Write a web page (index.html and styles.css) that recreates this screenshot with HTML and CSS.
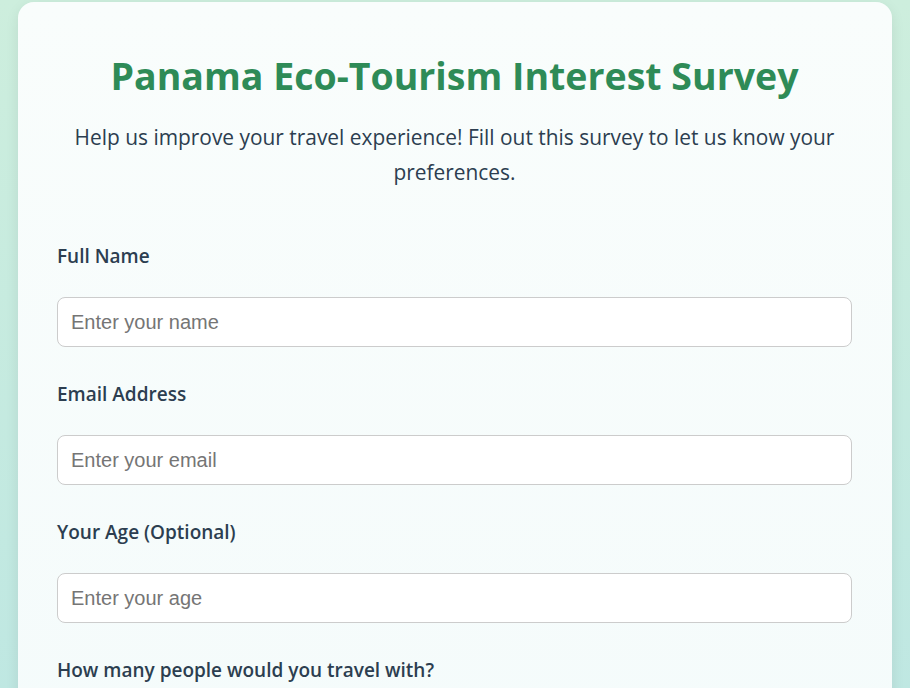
FILE: index.html
```html
<!DOCTYPE html>
<html lang="en">
<head>
<meta charset="utf-8">
<title>Panama Eco-Tourism Interest Survey</title>
<link rel="stylesheet" href="styles.css">
</head>
<body>
<main class="card">
  <h1 class="title">Panama Eco-Tourism Interest Survey</h1>
  <p class="intro">Help us improve your travel experience! Fill out this survey to let us know your preferences.</p>
  <form class="form">
    <div class="group">
      <label class="label" for="name">Full Name</label>
      <input class="input" id="name" type="text" placeholder="Enter your name">
    </div>
    <div class="group">
      <label class="label" for="email">Email Address</label>
      <input class="input" id="email" type="email" placeholder="Enter your email">
    </div>
    <div class="group">
      <label class="label" for="age">Your Age (Optional)</label>
      <input class="input" id="age" type="number" placeholder="Enter your age">
    </div>
    <div class="group">
      <label class="label" for="people">How many people would you travel with?</label>
      <input class="input" id="people" type="number" placeholder="Number of people">
    </div>
  </form>
</main>
</body>
</html>
```

FILE: styles.css
```css
html, body {
  margin: 0;
  padding: 0;
}
body {
  min-height: 100vh;
  background: linear-gradient(180deg, #cdeedd 0%, #bce6e3 100%);
  font-family: "Open Sans", "Noto Sans", sans-serif;
  color: #2c3e50;
  padding-top: 2px;
  overflow: hidden;
}
.card {
  box-sizing: border-box;
  width: 874px;
  margin: 0 auto;
  padding: 40px 40px 40px 39px;
  background: linear-gradient(180deg, #f9fdfc 0%, #f4fbfb 100%);
  border-radius: 16px;
  box-shadow: 0 4px 14px rgba(0, 0, 0, 0.08);
}
.title {
  margin: 8px 0 0;
  text-align: center;
  color: #2e8b57;
  font-size: 37.5px;
  line-height: 52px;
  font-weight: 700;
}
.intro {
  margin: 18px 0 0;
  text-align: center;
  font-size: 20.9px;
  line-height: 35px;
}
.form {
  margin-top: 52px;
}
.group {
  margin-bottom: 33px;
}
.label {
  display: block;
  font-size: 19px;
  line-height: 29px;
  font-weight: 600;
  margin-bottom: 26px;
}
.input {
  display: block;
  box-sizing: border-box;
  width: 100%;
  height: 50px;
  padding: 0 13px;
  border: 1px solid #cccccc;
  border-radius: 8px;
  background: #ffffff;
  font-family: "Liberation Sans", Arial, sans-serif;
  font-size: 20px;
  color: #333;
}
.input::placeholder {
  color: #757575;
}
```
